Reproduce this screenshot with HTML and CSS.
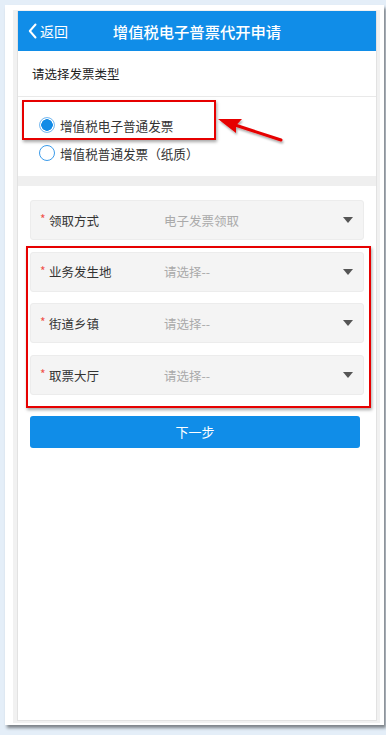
FILE: index.html
```html
<!DOCTYPE html>
<html lang="zh-CN">
<head>
<meta charset="utf-8">
<title>增值税电子普票代开申请</title>
<link rel="stylesheet" href="styles.css">
</head>
<body>
<div class="frame">
  <div class="panel">
    <div class="page">
      <header class="topbar">
        <a class="back">
          <svg class="back-icon" width="9" height="16" viewBox="0 0 9 16"><path d="M7.5 1.5 L1.8 8 L7.5 14.5" fill="none" stroke="#fff" stroke-width="2" stroke-linecap="round" stroke-linejoin="round"/></svg>
          <span>返回</span>
        </a>
        <h1 class="title">增值税电子普票代开申请</h1>
      </header>

      <div class="section-title">请选择发票类型</div>

      <div class="radios">
        <label class="radio">
          <span class="dot checked"></span>
          <span class="radio-text">增值税电子普通发票</span>
        </label>
        <label class="radio">
          <span class="dot"></span>
          <span class="radio-text">增值税普通发票（纸质）</span>
        </label>
      </div>

      <div class="band"></div>

      <div class="form">
        <div class="field">
          <span class="req">*</span>
          <span class="label">领取方式</span>
          <span class="value">电子发票领取</span>
          <span class="caret"></span>
        </div>
        <div class="field">
          <span class="req">*</span>
          <span class="label">业务发生地</span>
          <span class="value">请选择--</span>
          <span class="caret"></span>
        </div>
        <div class="field">
          <span class="req">*</span>
          <span class="label">街道乡镇</span>
          <span class="value">请选择--</span>
          <span class="caret"></span>
        </div>
        <div class="field">
          <span class="req">*</span>
          <span class="label">取票大厅</span>
          <span class="value">请选择--</span>
          <span class="caret"></span>
        </div>
        <button class="next">下一步</button>
      </div>
    </div>
  </div>
</div>

<div class="mark mark-radio"></div>
<div class="mark mark-fields"></div>
<svg class="arrow" width="386" height="735" viewBox="0 0 386 735">
  <defs>
    <filter id="sh" x="-20%" y="-20%" width="140%" height="160%">
      <feDropShadow dx="1" dy="2" stdDeviation="1.2" flood-color="#000" flood-opacity="0.35"/>
    </filter>
  </defs>
  <g filter="url(#sh)">
    <line x1="281" y1="140" x2="232" y2="124" stroke="#e60000" stroke-width="3" stroke-linecap="round"/>
    <polygon points="218,119 242,119 236,125.5 236,133" fill="#e60000"/>
  </g>
</svg>
</body>
</html>
```

FILE: styles.css
```css
* { box-sizing: border-box; }

html, body {
  margin: 0;
  padding: 0;
}

body {
  width: 386px;
  height: 735px;
  background: #e4eef8;
  font-family: "Noto Sans CJK SC", "Noto Sans", sans-serif;
  color: #333;
  position: relative;
  overflow: hidden;
}

.frame {
  position: absolute;
  left: 5px;
  top: 5px;
  width: 379px;
  height: 720px;
  background: #fff;
  padding: 5px 4px 2px 8px;
  box-shadow: 2px 3px 3px rgba(0, 0, 0, 0.45);
}

.panel {
  height: 100%;
  background: #f1f1f1;
  padding: 1px 3px 2px 4px;
}

.page {
  height: 100%;
  background: #fff;
  border: 1px solid #e2e2e2;
  border-top: none;
  display: flex;
  flex-direction: column;
}

.topbar {
  height: 40px;
  background: #108de8;
  color: #fff;
  display: flex;
  align-items: center;
  position: relative;
  flex: none;
}

.back {
  display: flex;
  align-items: center;
  gap: 3px;
  padding-left: 10px;
  font-size: 14px;
  color: #fff;
}

.back-icon { display: block; }

.title {
  position: absolute;
  left: 0;
  right: 0;
  top: 0;
  bottom: 0;
  margin: 0;
  display: flex;
  align-items: center;
  justify-content: center;
  font-size: 15.3px;
  font-weight: 500;
  pointer-events: none;
}

.section-title {
  height: 46px;
  flex: none;
  display: flex;
  align-items: center;
  padding-left: 14px;
  font-size: 12.5px;
  color: #222;
  border-bottom: 1px solid #e9e9e9;
}

.radios {
  flex: none;
  padding: 14px 0 9px 21px;
}

.radio {
  height: 28px;
  display: flex;
  align-items: center;
  gap: 5px;
  font-size: 12.6px;
  color: #333;
}

.dot {
  width: 16px;
  height: 16px;
  border-radius: 50%;
  border: 1px solid #3b9bea;
  background: #fff;
  flex: none;
}

.dot.checked {
  border: 1px solid #7dbcf0;
  background: radial-gradient(circle, #118be6 0 5.5px, #fff 6px 6.5px, #c7e2f9 7px);
}

.band {
  height: 10px;
  flex: none;
  background: #efefef;
}

.form {
  padding: 14px 0 0 12px;
  display: flex;
  flex-direction: column;
  gap: 11.7px;
}

.field {
  width: 334px;
  height: 40px;
  background: #f4f4f4;
  border: 1px solid #ececec;
  border-radius: 3px;
  display: flex;
  align-items: center;
  padding: 0 10px 0 9px;
  font-size: 12.5px;
}

.req {
  color: #f0524a;
  width: 9px;
  font-size: 12px;
  line-height: 1;
  position: relative;
  top: -1px;
}

.label {
  width: 115px;
  color: #333;
}

.value {
  flex: 1;
  color: #aaa;
}

.caret {
  width: 0;
  height: 0;
  border-left: 5px solid transparent;
  border-right: 5px solid transparent;
  border-top: 6px solid #555;
}

.next {
  margin-top: 9px;
  width: 330px;
  height: 32px;
  border: none;
  border-radius: 3px;
  background: #108de8;
  color: #fff;
  font-family: inherit;
  font-size: 13px;
  padding: 0;
}

.mark {
  position: absolute;
  border: 2px solid #e60000;
  box-shadow: 1px 2px 3px rgba(0, 0, 0, 0.35);
}

.mark-radio {
  left: 22px;
  top: 100px;
  width: 194px;
  height: 40px;
}

.mark-fields {
  left: 26px;
  top: 246px;
  width: 345px;
  height: 162px;
}

.arrow {
  position: absolute;
  left: 0;
  top: 0;
  pointer-events: none;
}
```
